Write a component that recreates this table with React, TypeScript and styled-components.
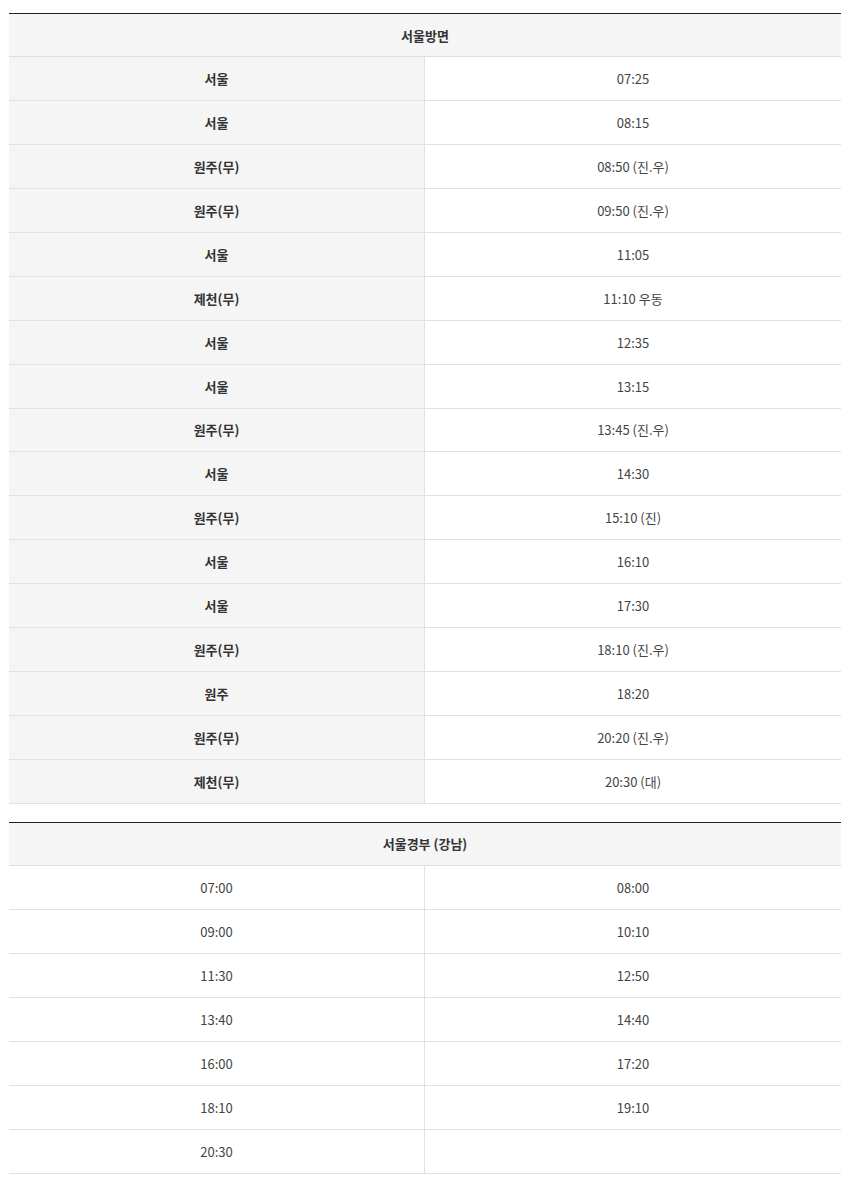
import styled, { createGlobalStyle } from "styled-components";

const GlobalStyle = createGlobalStyle`
  body {
    margin: 0;
    background: #fff;
    font-family: "Noto Sans CJK KR", "Noto Sans", sans-serif;
    color: #333;
  }
`;

const seoulRows: [string, string][] = [
  ["서울", "07:25"],
  ["서울", "08:15"],
  ["원주(무)", "08:50 (진.우)"],
  ["원주(무)", "09:50 (진.우)"],
  ["서울", "11:05"],
  ["제천(무)", "11:10 우동"],
  ["서울", "12:35"],
  ["서울", "13:15"],
  ["원주(무)", "13:45 (진.우)"],
  ["서울", "14:30"],
  ["원주(무)", "15:10 (진)"],
  ["서울", "16:10"],
  ["서울", "17:30"],
  ["원주(무)", "18:10 (진.우)"],
  ["원주", "18:20"],
  ["원주(무)", "20:20 (진.우)"],
  ["제천(무)", "20:30 (대)"],
];

const gangnamRows: [string, string][] = [
  ["07:00", "08:00"],
  ["09:00", "10:10"],
  ["11:30", "12:50"],
  ["13:40", "14:40"],
  ["16:00", "17:20"],
  ["18:10", "19:10"],
  ["20:30", ""],
];

export default function App() {
  return (
    <Page>
      <GlobalStyle />
      <Table>
        <Header>서울방면</Header>
        {seoulRows.map(([dest, time], i) => (
          <Row key={i}>
            <Cell $label>{dest}</Cell>
            <Cell>{time}</Cell>
          </Row>
        ))}
      </Table>
      <Table>
        <Header>서울경부 (강남)</Header>
        {gangnamRows.map(([a, b], i) => (
          <Row key={i}>
            <Cell>{a}</Cell>
            <Cell>{b}</Cell>
          </Row>
        ))}
      </Table>
    </Page>
  );
}

const Page = styled.div`
  display: flex;
  flex-direction: column;
  gap: 18px;
  padding: 13px 11px 8px 9px;
`;

const Table = styled.div`
  display: flex;
  flex-direction: column;
  border-top: 1px solid #222;
`;

const Header = styled.div`
  height: 42px;
  display: flex;
  align-items: center;
  justify-content: center;
  background: #f5f5f5;
  border-bottom: 1px solid #dedede;
  font-size: 13px;
  font-weight: 700;
  color: #333;
`;

const Row = styled.div`
  display: grid;
  grid-template-columns: 415px 1fr;
  height: 43.94px;
  border-bottom: 1px solid #e2e2e2;
  box-sizing: border-box;
`;

const Cell = styled.div<{ $label?: boolean }>`
  display: flex;
  align-items: center;
  justify-content: center;
  font-size: 13px;
  font-weight: ${(p) => (p.$label ? 700 : 400)};
  color: ${(p) => (p.$label ? "#333" : "#444")};
  background: ${(p) => (p.$label ? "#f5f5f5" : "#fff")};
  & + & {
    border-left: 1px solid #e2e2e2;
  }
`;
